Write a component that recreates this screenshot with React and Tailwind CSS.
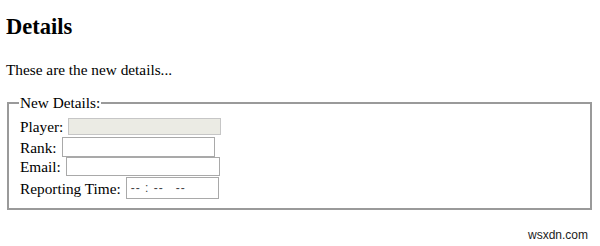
const serif = { fontFamily: '"Liberation Serif", "Times New Roman", serif' };

const Field = ({ label, width, height, gap, disabled, children }) => (
  <div className="flex items-center">
    <span className="text-[15.3px] leading-[17px] text-black">{label}</span>
    <div
      className={
        "border border-[#a9a9a9] " +
        (disabled ? "bg-[#ebebe4] border-[#c6c6c6]" : "bg-white")
      }
      style={{ width, height, marginLeft: gap }}
    >
      {children}
    </div>
  </div>
);

export default function App() {
  return (
    <div className="relative h-[246px] w-[600px] overflow-hidden bg-white px-[6px] text-black" style={serif}>
      <h2 className="mt-[14px] text-[22.5px] font-bold leading-[26px]">Details</h2>
      <p className="mt-[21px] text-[15.3px] leading-[17px]">These are the new details...</p>

      <fieldset className="mt-[16px] mr-[2px] ml-[1px] border-2 border-[#9a9a9a] pt-[7px] pb-[9px] pl-[11px]">
        <legend className="px-[1px] -ml-[1px] text-[15.3px] leading-[17px]">New Details:</legend>
        <div className="flex flex-col">
          <Field label="Player:" width={153} height={17} gap={5} disabled />
          <div className="mt-[2px]">
            <Field label="Rank:" width={153} height={20} gap={5} />
          </div>
          <Field label="Email:" width={154} height={19} gap={5} />
          <div className="mt-[1px]">
            <Field label="Reporting Time:" width={93} height={22} gap={5}>
              <div
                className="flex h-full items-center pl-[4px] text-[12px] tracking-[1px] text-[#444]"
                style={{ fontFamily: '"Liberation Sans", Arial, sans-serif' }}
              >
                <span>-- : --</span>
                <span className="ml-[12px]">--</span>
              </div>
            </Field>
          </div>
        </div>
      </fieldset>

      <div
        className="absolute right-[12px] top-[228px] text-[12px] leading-[14px] text-[#222]"
        style={{ fontFamily: '"Liberation Sans", Arial, sans-serif' }}
      >
        wsxdn.com
      </div>
    </div>
  );
}
